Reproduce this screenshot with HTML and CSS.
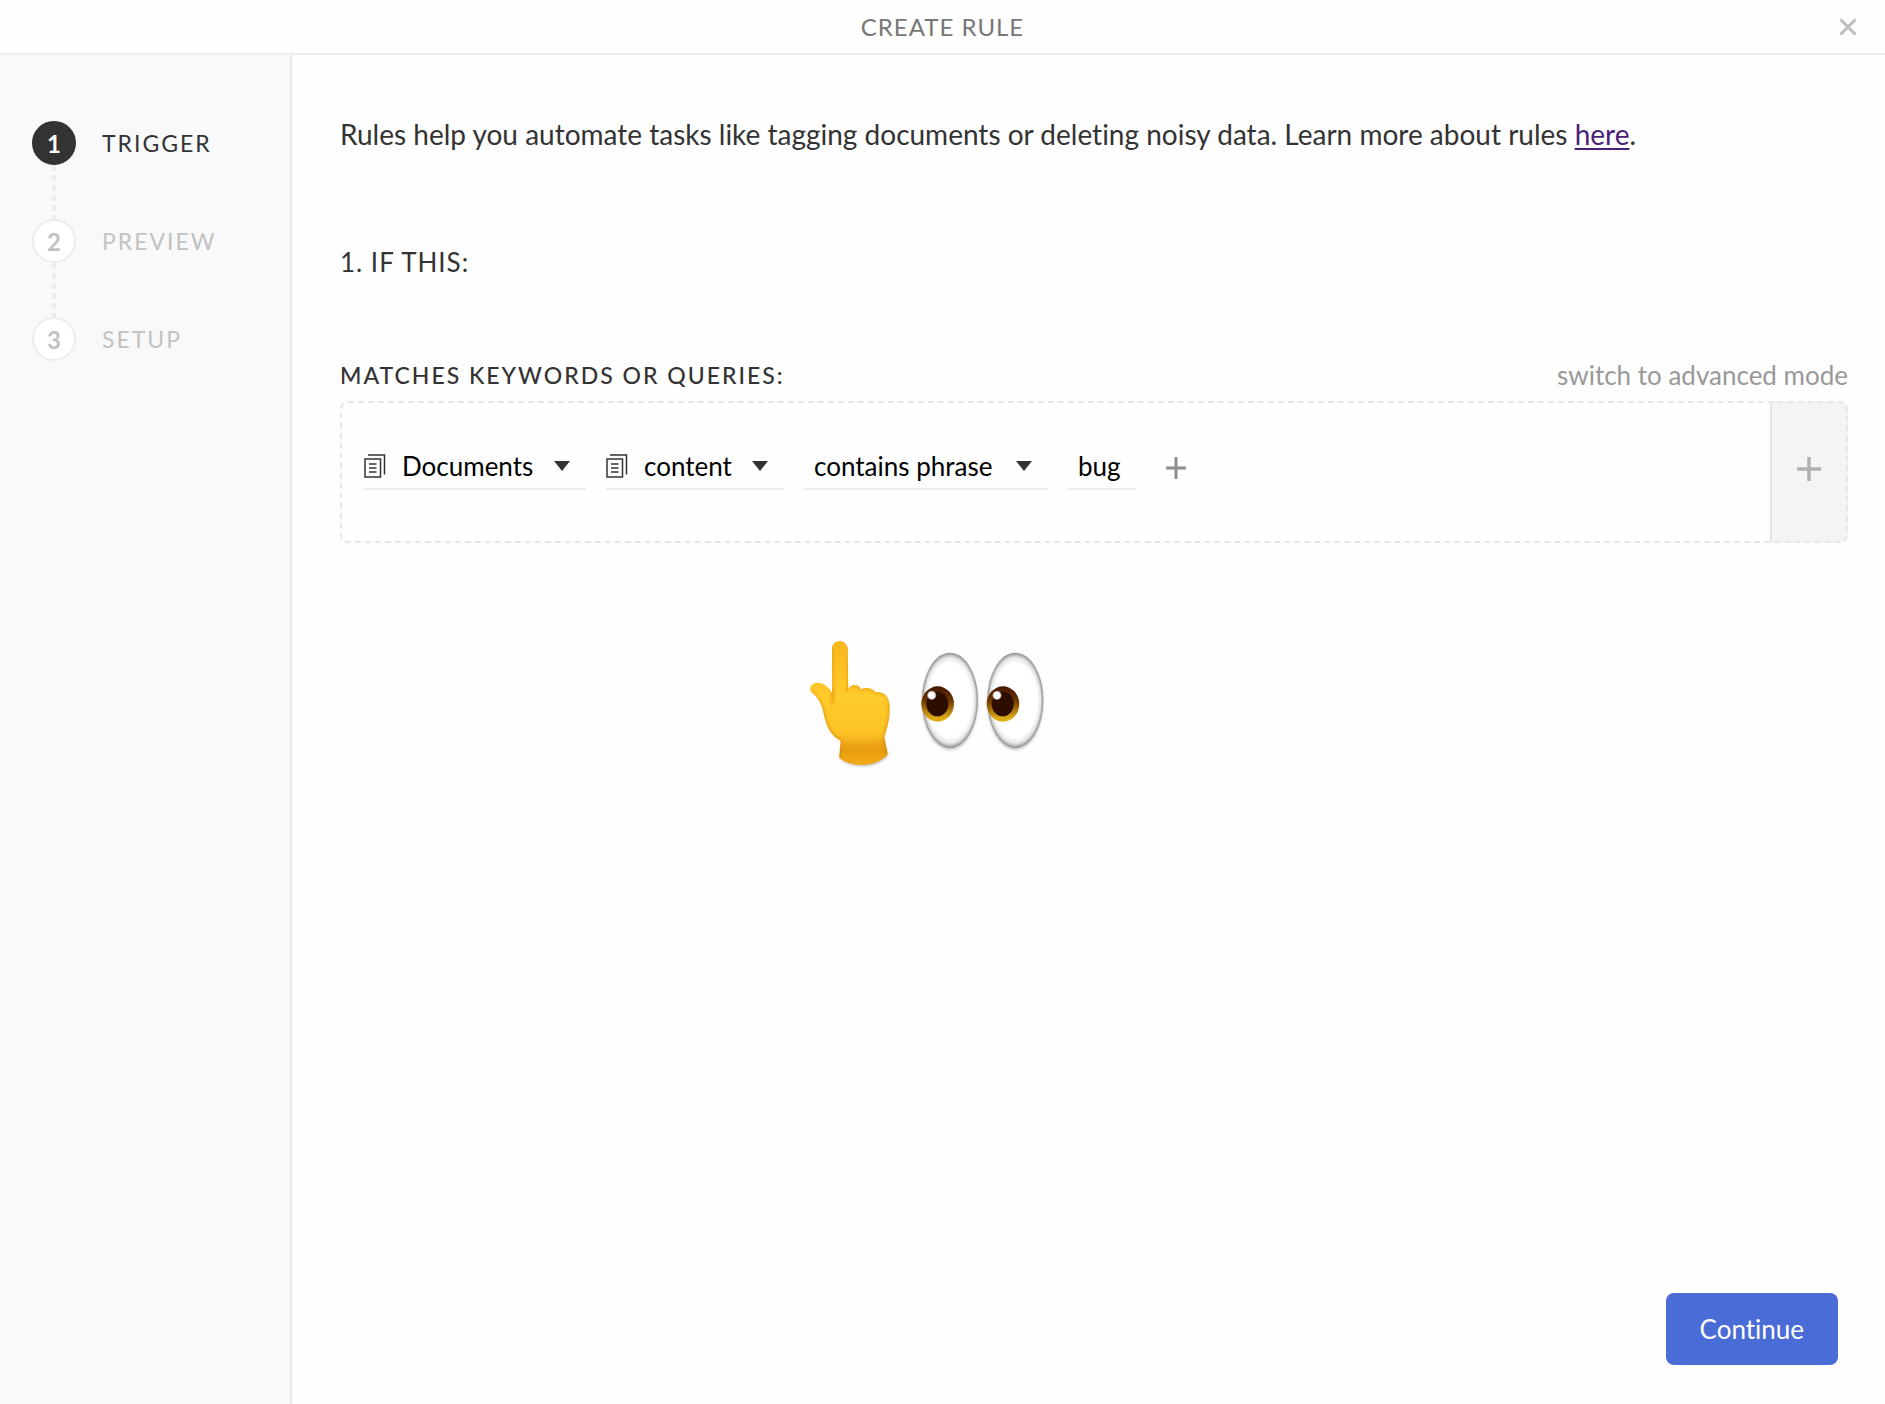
FILE: index.html
```html
<!DOCTYPE html>
<html lang="en">
<head>
<meta charset="utf-8">
<meta name="viewport" content="width=device-width, initial-scale=1">
<title>Create rule</title>
<link rel="stylesheet" href="styles.css">
</head>
<body>
<header class="topbar">
  <h1 class="topbar-title">CREATE RULE</h1>
  <button class="close" type="button" aria-label="Close">
    <svg width="18" height="18" viewBox="0 0 18 18" aria-hidden="true"><path d="M1.5 1.5 16.5 16.5M16.5 1.5 1.5 16.5" stroke="currentColor" stroke-width="3"/></svg>
  </button>
</header>
<div class="layout">
  <nav class="sidebar" aria-label="Steps">
    <ol class="steps">
      <li class="step step-active" aria-current="step"><span class="step-num">1</span><span class="step-name">TRIGGER</span></li>
      <li class="step"><span class="step-num">2</span><span class="step-name">PREVIEW</span></li>
      <li class="step"><span class="step-num">3</span><span class="step-name">SETUP</span></li>
    </ol>
  </nav>
  <main class="content">
    <p class="intro">Rules help you automate tasks like tagging documents or deleting noisy data. Learn more about rules <a class="link" href="#rules">here</a>.</p>
    <h2 class="heading">1. IF THIS:</h2>
    <div class="query-head">
      <h3 class="label">MATCHES KEYWORDS OR QUERIES:</h3>
      <button class="mode" type="button">switch to advanced mode</button>
    </div>
    <div class="query">
      <div class="fields">
        <div class="field field-source">
          <svg class="doc" width="22" height="24" viewBox="0 0 22 24" aria-hidden="true"><path d="M1 5H16.500V23H1ZM4 1H20.500V20.500M5 10H12.500M5 14H12.500M5 18H12.500" fill="none" stroke="currentColor" stroke-width="1.500"/></svg>
          <select class="select" aria-label="Source"><option>Documents</option></select>
          <svg class="caret" width="16" height="10" viewBox="0 0 16 10" aria-hidden="true"><path d="M0 0H16L8 10Z" fill="currentColor"/></svg>
        </div>
        <div class="field field-attribute">
          <svg class="doc" width="22" height="24" viewBox="0 0 22 24" aria-hidden="true"><path d="M1 5H16.500V23H1ZM4 1H20.500V20.500M5 10H12.500M5 14H12.500M5 18H12.500" fill="none" stroke="currentColor" stroke-width="1.500"/></svg>
          <select class="select" aria-label="Attribute"><option>content</option></select>
          <svg class="caret" width="16" height="10" viewBox="0 0 16 10" aria-hidden="true"><path d="M0 0H16L8 10Z" fill="currentColor"/></svg>
        </div>
        <div class="field field-operator">
          <select class="select" aria-label="Operator"><option>contains phrase</option></select>
          <svg class="caret" width="16" height="10" viewBox="0 0 16 10" aria-hidden="true"><path d="M0 0H16L8 10Z" fill="currentColor"/></svg>
        </div>
        <div class="field field-value">
          <input class="value" type="text" value="bug" aria-label="Phrase">
        </div>
        <button class="add" type="button" aria-label="Add phrase">
          <svg width="20" height="22" viewBox="0 0 20 22" aria-hidden="true"><path d="M0 11H20M10 0V22" stroke="currentColor" stroke-width="3"/></svg>
        </button>
      </div>
      <button class="add-group" type="button" aria-label="Add condition">
        <svg width="24" height="24" viewBox="0 0 24 24" aria-hidden="true"><path d="M0 12H24M12 0V24" stroke="currentColor" stroke-width="3.500"/></svg>
      </button>
    </div>
    <svg class="hint" width="280" height="160" viewBox="0 0 840 480" role="img" aria-label="Look up here">
      <defs>
        <linearGradient id="skin" x1="0" y1="0" x2="0" y2="1"><stop offset="0" stop-color="#f9b51b"/><stop offset=".45" stop-color="#ffcb2c"/><stop offset=".72" stop-color="#fdc225"/><stop offset=".86" stop-color="#eba313"/><stop offset="1" stop-color="#f9b820"/></linearGradient>
        <linearGradient id="finger" x1="0" y1="0" x2="1" y2="0"><stop offset="0" stop-color="#f0a610"/><stop offset=".3" stop-color="#ffc629" stop-opacity="0"/><stop offset=".75" stop-color="#ffc629" stop-opacity="0"/><stop offset="1" stop-color="#f0a610"/></linearGradient>
        <radialGradient id="eyeball"><stop offset=".78" stop-color="#fff"/><stop offset=".9" stop-color="#e6e6e6"/><stop offset="1" stop-color="#8c8c8c"/></radialGradient>
        <linearGradient id="iris" x1="0" y1="0" x2="0" y2="1"><stop offset="0" stop-color="#431600"/><stop offset=".4" stop-color="#6c3700"/><stop offset=".9" stop-color="#deac14"/></linearGradient>
        <radialGradient id="shine"><stop offset=".65" stop-color="#fff"/><stop offset="1" stop-color="#fff" stop-opacity="0"/></radialGradient>
        <filter id="soft" x="-20%" y="-20%" width="140%" height="140%"><feGaussianBlur stdDeviation="4"/></filter>
        <clipPath id="hand"><path d="M126 88C127 55 171 55 173 88L175 206C185 191 207 192 213 208C225 202 247 202 256 216C283 213 299 232 299 258C300 298 293 318 283 352L293 403C260 445 178 442 148 413L152 363C119 344 107 314 101 281C94 244 79 228 63 216C54 199 70 186 88 189C108 191 119 207 127 220Z"/></clipPath>
      </defs>
      <path d="M150 414C180 447 260 447 293 407L289 385H152Z" fill="#777" opacity=".55" filter="url(#soft)"/>
      <g clip-path="url(#hand)">
        <rect x="50" y="55" width="260" height="390" fill="url(#skin)"/>
        <path d="M126 62H174V215C160 228 140 235 126 220Z" fill="url(#finger)"/>
        <path d="M127 205V250M63 216C79 228 94 244 101 281C107 314 119 344 152 363M299 258C300 298 293 318 283 352" fill="none" stroke="#dc8605" stroke-width="8" opacity=".65" filter="url(#soft)"/>
        <path d="M150 360C180 372 250 376 285 350L293 403L290 440H145Z" fill="#dc8800" opacity=".18" filter="url(#soft)"/>
        <path d="M175 206C185 191 207 192 213 208C225 202 247 202 256 216C283 213 299 232 299 258" fill="none" stroke="#e89a0c" stroke-width="8" opacity=".65" filter="url(#soft)"/>
        <path d="M148 366L145 414M285 354L294 403" stroke="#b86200" stroke-width="10" opacity=".5" filter="url(#soft)"/>
      </g>
      <g id="eye">
        <ellipse cx="480" cy="246" rx="83" ry="143" fill="#888" opacity=".55" filter="url(#soft)"/>
        <ellipse cx="480" cy="241" rx="84" ry="143" fill="url(#eyeball)"/>
        <ellipse cx="443" cy="252" rx="49" ry="53" fill="url(#iris)"/>
        <ellipse cx="442" cy="252" rx="33" ry="37" fill="#2d0d00"/>
        <circle cx="425" cy="226" r="15" fill="url(#shine)"/>
      </g>
      <use href="#eye" x="196"/>
    </svg>
    <div class="actions"><button class="continue" type="button">Continue</button></div>
  </main>
</div>
</body>
</html>
```
FILE: styles.css
```css
* { box-sizing: border-box; }
body {
  margin: 0;
  min-height: 100vh;
  display: flex;
  flex-direction: column;
  font-family: Lato, "Open Sans", sans-serif;
  font-size: 26px;
  line-height: 30px;
  font-variant-ligatures: none;
  color: #333;
  background: #fefefe;
}
h1, h2, h3, p, ol { margin: 0; padding: 0; font-weight: 400; }
button, select, input { font: inherit; font-variant-ligatures: none; border: 0; padding: 0; background: none; }
button { cursor: pointer; }
svg { display: block; flex: none; }

.topbar {
  display: grid;
  grid-template-columns: 1fr auto 1fr;
  align-items: center;
  height: 55px;
  padding: 0 28px;
  border-bottom: 2px solid #ececee;
}
.topbar-title { grid-column: 2; font-size: 24px; letter-spacing: 1px; color: #777; }
.close { justify-self: end; color: #bdbdbd; }

.layout { flex: 1; display: flex; }
.sidebar {
  flex: none;
  width: 292px;
  padding: 66px 32px;
  background: #f8f9fb;
  border-right: 2px solid #e9eaed;
}
.steps { list-style: none; display: flex; flex-direction: column; gap: 54px; }
.step { position: relative; display: flex; align-items: center; gap: 26px; color: #c2c2c2; }
.step + .step::before {
  content: "";
  position: absolute;
  left: 20px;
  bottom: 100%;
  width: 4px;
  height: 54px;
  background: repeating-linear-gradient(#ebecee 0 6px, transparent 6px 10px);
}
.step-num {
  width: 44px;
  height: 44px;
  border: 2px solid #ededf1;
  border-radius: 50%;
  background: #fff;
  font-size: 24px;
  font-weight: 700;
  line-height: 42px;
  text-align: center;
}
.step-name { font-size: 23px; letter-spacing: 2px; }
.step-active { color: #333; }
.step-active .step-num { background: #333; border-color: #333; color: #fff; }

.content {
  flex: 1;
  min-width: 0;
  display: flex;
  flex-direction: column;
  padding: 61px 37px 39px 48px;
}
.intro, .heading { line-height: 36px; }
.intro { font-size: 28px; }
.heading { margin-top: 92px; font-size: 26px; letter-spacing: 1px; }
.link { color: #4b1f7a; text-decoration-thickness: 2px; text-underline-offset: 3px; }
.query-head { display: flex; justify-content: space-between; margin: 80px 0 11px; }
.label { font-size: 23px; font-weight: 500; letter-spacing: 2px; }
.mode { color: #999; }

.query {
  display: flex;
  min-height: 142px;
  border: 2px dashed #e6e6e8;
  border-radius: 8px;
  background: linear-gradient(to left, #f4f4f4 78px, #fefefe 78px) border-box;
}
.fields { flex: 1; display: flex; align-items: center; gap: 20px; padding: 0 0 8px 22px; }
.field {
  display: flex;
  align-items: center;
  height: 44px;
  padding-bottom: 2px;
  border-bottom: 2px solid #ececf0;
}
.field-source { width: 222px; }
.field-attribute { width: 178px; }
.field-operator { width: 244px; padding-left: 10px; }
.field-value { width: 68px; padding-left: 10px; }
.doc { margin-right: 16px; }
.select {
  flex: 1;
  min-width: 0;
  appearance: none;
  color: #000;
}
.caret { margin: 0 16px 0 8px; pointer-events: none; }
.value { width: 100%; color: #000; }
.add { padding: 0 10px; color: #8f8f8f; }
.add-group {
  flex: none;
  width: 76px;
  display: grid;
  place-items: center;
  padding-bottom: 6px;
  border-left: 2px solid #e4e4e6;
  color: #b0b0b0;
}
.hint { margin: 77px 0 0 450px; }
.actions { margin-top: auto; padding-right: 10px; display: flex; justify-content: flex-end; }
.continue {
  padding: 21px 34px;
  border-radius: 8px;
  background: #4a6cd6;
  color: #fff;
}
```
